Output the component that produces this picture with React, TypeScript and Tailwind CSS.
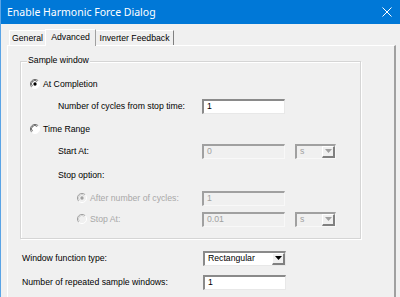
import React from "react";

const Radio = ({ checked, disabled }: { checked?: boolean; disabled?: boolean }) => (
  <svg width="10" height="10" viewBox="0 0 12 12" className="shrink-0">
    <circle cx="6" cy="6" r="5.5" fill={disabled ? "#f0f0f0" : "#ffffff"} />
    <path d="M 2.1 9.9 A 5.5 5.5 0 0 1 9.9 2.1" stroke={disabled ? "#a0a0a0" : "#707070"} strokeWidth="1.2" fill="none" />
    <path d="M 3.0 8.6 A 3.8 3.8 0 0 1 8.6 3.0" stroke={disabled ? "#c8c8c8" : "#404040"} strokeWidth="1" fill="none" />
    <path d="M 9.9 2.1 A 5.5 5.5 0 0 1 2.1 9.9" stroke="#ffffff" strokeWidth="1.2" fill="none" />
    {checked && <circle cx="6" cy="6" r="2" fill={disabled ? "#a0a0a0" : "#000000"} />}
  </svg>
);

const Field = ({ value, disabled }: { value: string; disabled?: boolean }) => (
  <div
    className={
      disabled
        ? "h-[15px] w-[83px] shrink-0 flex items-center pl-[3px] border-l-2 border-t-2 border-r border-b border-l-[#a0a0a0] border-t-[#a0a0a0] border-r-[#f8f8f8] border-b-[#f8f8f8] bg-[#f0f0f0] text-[#a0a0a0]"
        : "h-[15px] w-[83px] shrink-0 flex items-center pl-[3px] border-l-2 border-t-2 border-r border-b border-l-[#8a8a8a] border-t-[#8a8a8a] border-r-[#e8e8e8] border-b-[#e8e8e8] bg-white text-black"
    }
  >
    {value}
  </div>
);

const Arrow = ({ disabled }: { disabled?: boolean }) => (
  <svg width="7" height="4" viewBox="0 0 7 4">
    <path d="M0 0 L7 0 L3.5 4 Z" fill={disabled ? "#a0a0a0" : "#000000"} />
  </svg>
);

const Combo = ({ value, disabled, wide }: { value: string; disabled?: boolean; wide?: boolean }) => (
  <div
    className={
      (wide ? "w-[83px] " : "w-[41px] ") +
      (disabled
        ? "h-[15px] shrink-0 flex items-stretch border-l-2 border-t-2 border-r border-b border-l-[#a0a0a0] border-t-[#a0a0a0] border-r-[#f8f8f8] border-b-[#f8f8f8] bg-[#f0f0f0] text-[#a0a0a0]"
        : "h-[15px] shrink-0 flex items-stretch border-l-2 border-t-2 border-r border-b border-l-[#8a8a8a] border-t-[#8a8a8a] border-r-[#e8e8e8] border-b-[#e8e8e8] bg-white text-black")
    }
  >
    <div className="flex-1 flex items-center pl-[3px]">{value}</div>
    <div className="w-[13px] flex items-center justify-center bg-[#f0f0f0] border-t border-l border-t-white border-l-white border-r-2 border-b-2 border-r-[#808080] border-b-[#808080]">
      <Arrow disabled={disabled} />
    </div>
  </div>
);

export default function App() {
  return (
    <div className="w-[400px] h-[297px] bg-[#f0f0f0] overflow-hidden flex flex-col border-l border-[#5aa4e6] font-['Liberation_Sans',Arial,sans-serif] text-[8.7px] text-black leading-none">
      <div className="h-[24px] shrink-0 bg-[#0078d7] flex items-center justify-between pl-[6px] pr-[8px] -ml-px">
        <span className="text-white text-[10.5px] font-['Noto_Sans',sans-serif] pl-px">Enable Harmonic Force Dialog</span>
        <svg width="10" height="10" viewBox="0 0 10 10">
          <path d="M0.5 0.5 L9.5 9.5 M9.5 0.5 L0.5 9.5" stroke="#ffffff" strokeWidth="1" />
        </svg>
      </div>

      <div className="flex-1 flex flex-col pl-[6px]">
        <div className="h-[17px] mt-[4px] flex items-end pl-[2px] shrink-0">
          <div className="h-[15px] w-[36px] flex items-center justify-center border-t border-l border-white mb-0">General</div>
          <div className="h-[17px] w-[51px] flex items-center justify-center border-t border-l border-white border-r border-r-[#a0a0a0] bg-[#f0f0f0] -mb-px relative z-10 pb-[2px]">Advanced</div>
          <div className="h-[15px] w-[78px] flex items-center justify-center border-t border-white border-r border-r-[#808080]">Inverter Feedback</div>
        </div>

        <div className="w-[389px] flex-1 border-t border-l border-white border-r-2 border-r-[#a0a0a0] flex flex-col pl-[12px]">
          <div className="relative mt-[15px] w-[341px] border border-[#d5d5d5] shadow-[inset_1px_1px_0_#ffffff,1px_1px_0_#ffffff] flex flex-col pt-[12px] pb-[9px]">
            <div className="absolute -top-[6px] left-[6px] px-[1px] bg-[#f0f0f0]">Sample window</div>

            <div className="h-[20px] flex items-center pl-[9px] gap-[3px]">
              <Radio checked />
              <span>At Completion</span>
            </div>

            <div className="h-[20px] mt-[2px] flex items-center">
              <div className="w-[181px] pl-[37px]">Number of cycles from stop time:</div>
              <Field value="1" />
            </div>

            <div className="h-[20px] mt-[3px] flex items-center pl-[9px] gap-[3px]">
              <Radio />
              <span>Time Range</span>
            </div>

            <div className="h-[20px] mt-[2px] flex items-center">
              <div className="w-[181px] pl-[37px]">Start At:</div>
              <Field value="0" disabled />
              <div className="w-[10px]" />
              <Combo value="s" disabled />
            </div>

            <div className="h-[20px] mt-[4px] flex items-center">
              <div className="pl-[37px]">Stop option:</div>
            </div>

            <div className="h-[20px] mt-[3px] flex items-center">
              <div className="w-[181px] pl-[56px] flex items-center gap-[3px] text-[#a8a8a8]">
                <Radio checked disabled />
                <span>After number of cycles:</span>
              </div>
              <Field value="1" disabled />
            </div>

            <div className="h-[20px] mt-[1px] flex items-center">
              <div className="w-[181px] pl-[56px] flex items-center gap-[3px] text-[#a8a8a8]">
                <Radio disabled />
                <span>Stop At:</span>
              </div>
              <Field value="0.01" disabled />
              <div className="w-[10px]" />
              <Combo value="s" disabled />
            </div>
          </div>

          <div className="h-[20px] mt-[9px] flex items-center">
            <div className="w-[183px] pl-[2px]">Window function type:</div>
            <Combo value="Rectangular" wide />
          </div>

          <div className="h-[20px] mt-[4px] flex items-center">
            <div className="w-[183px] pl-[2px]">Number of repeated sample windows:</div>
            <Field value="1" />
          </div>
        </div>
      </div>
    </div>
  );
}
